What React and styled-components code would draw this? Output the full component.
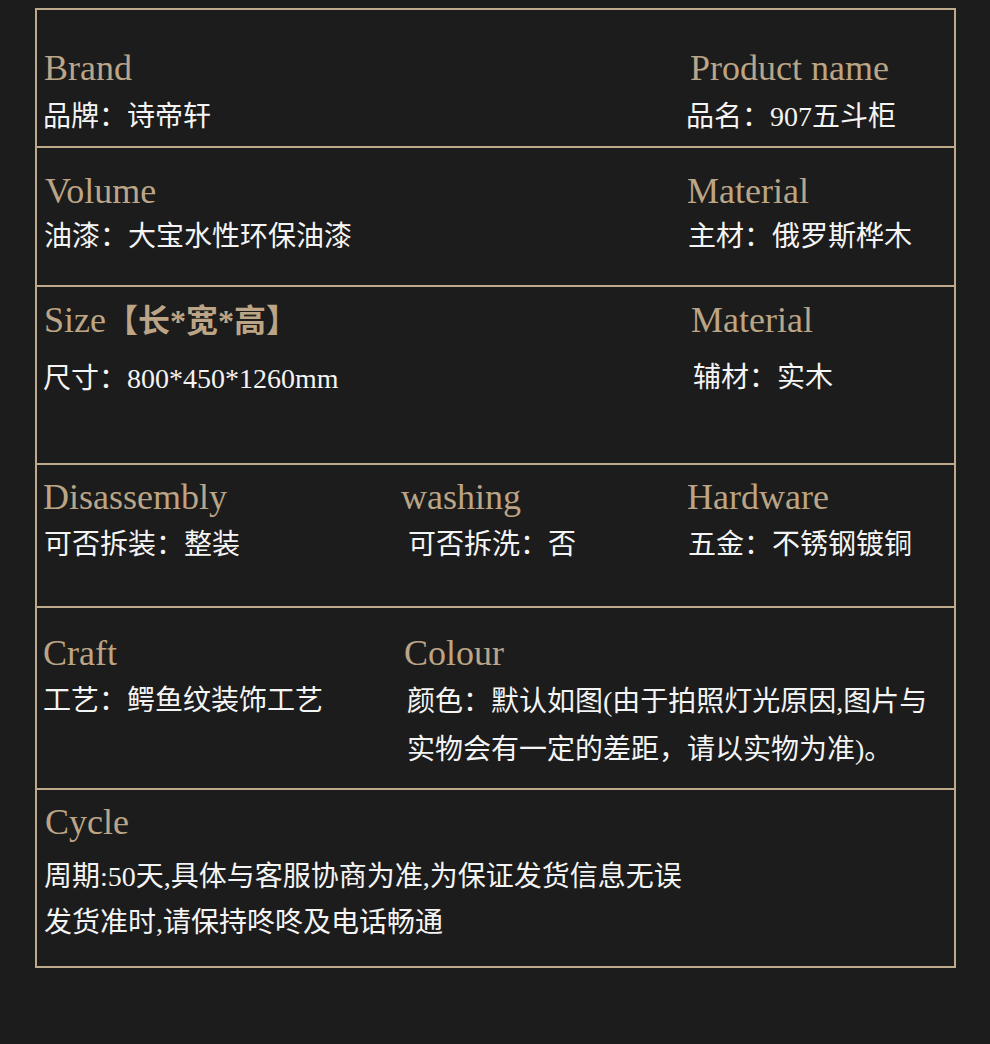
import React from 'react'
import styled, { createGlobalStyle } from 'styled-components'

const GlobalStyle = createGlobalStyle`
  html, body {
    margin: 0;
    background: #1c1c1c;
  }
  body {
    min-height: 1044px;
  }
`

const Page = styled.div`
  padding: 8px 0 0 35px;
`

const Table = styled.div`
  width: 917px;
  border: 2px solid #bfa98b;
`

const Row = styled.div`
  box-sizing: border-box;
  display: grid;
  grid-template-columns: 358px 286px 273px;
  height: ${p => p.$h}px;
  padding-top: ${p => p.$top}px;
  & + & {
    border-top: 2px solid #bfa98b;
  }
`

const Cell = styled.div`
  grid-column: span ${p => p.$span || 1};
  padding-right: 12px;
`

const Label = styled.div`
  font-family: "Liberation Serif", "Noto Sans CJK SC", serif;
  font-size: 36px;
  line-height: 40px;
  color: #bba586;
  padding-left: ${p => p.$x}px;
  white-space: nowrap;
`

const LabelCn = styled.span`
  font-size: 32px;
  font-weight: 700;
`

const Value = styled.div`
  font-family: "Liberation Serif", "Noto Sans CJK SC", serif;
  font-size: 28px;
  line-height: ${p => p.$lh || 46}px;
  color: #f4f4f4;
  margin-top: ${p => p.$gap}px;
  padding-left: ${p => p.$x}px;
`

const rows = [
  {
    h: 136, top: 38, gap: 6,
    cells: [
      { span: 2, label: 'Brand', lx: 7, value: '品牌：诗帝轩', vx: 6 },
      { label: 'Product name', lx: 9, value: '品名：907五斗柜', vx: 5 },
    ],
  },
  {
    h: 139, top: 23, gap: 3,
    cells: [
      { span: 2, label: 'Volume', lx: 8, value: '油漆：大宝水性环保油漆', vx: 7 },
      { label: 'Material', lx: 6, value: '主材：俄罗斯桦木', vx: 7 },
    ],
  },
  {
    h: 178, top: 13, gap: 15,
    cells: [
      { span: 2, label: 'Size', extra: '【长*宽*高】', lx: 7, value: '尺寸：800*450*1260mm', vx: 6 },
      { label: 'Material', lx: 10, value: '辅材：实木', vx: 12 },
    ],
  },
  {
    h: 143, top: 12, gap: 5,
    cells: [
      { label: 'Disassembly', lx: 6, value: '可否拆装：整装', vx: 7 },
      { label: 'washing', lx: 6, value: '可否拆洗：否', vx: 13 },
      { label: 'Hardware', lx: 6, value: '五金：不锈钢镀铜', vx: 7 },
    ],
  },
  {
    h: 182, top: 25, gap: 5,
    cells: [
      { label: 'Craft', lx: 6, value: '工艺：鳄鱼纹装饰工艺', vx: 6 },
      { span: 2, label: 'Colour', lx: 9, lh: 48, value: '颜色：默认如图(由于拍照灯光原因,图片与实物会有一定的差距，请以实物为准)。', vx: 12 },
    ],
  },
  {
    h: 178, top: 12, gap: 12,
    cells: [
      {
        span: 3, label: 'Cycle', lx: 8, vx: 7,
        value: ['周期:50天,具体与客服协商为准,为保证发货信息无误', '发货准时,请保持咚咚及电话畅通'],
      },
    ],
  },
]

export default function App() {
  return (
    <>
      <GlobalStyle />
      <Page>
        <Table>
          {rows.map((row, i) => (
            <Row key={i} $h={row.h} $top={row.top}>
              {row.cells.map((c, j) => (
                <Cell key={j} $span={c.span}>
                  <Label $x={c.lx}>
                    {c.label}
                    {c.extra && <LabelCn>{c.extra}</LabelCn>}
                  </Label>
                  <Value $gap={row.gap} $x={c.vx} $lh={c.lh}>
                    {Array.isArray(c.value)
                      ? c.value.map((line, k) => <div key={k}>{line}</div>)
                      : c.value}
                  </Value>
                </Cell>
              ))}
            </Row>
          ))}
        </Table>
      </Page>
    </>
  )
}
